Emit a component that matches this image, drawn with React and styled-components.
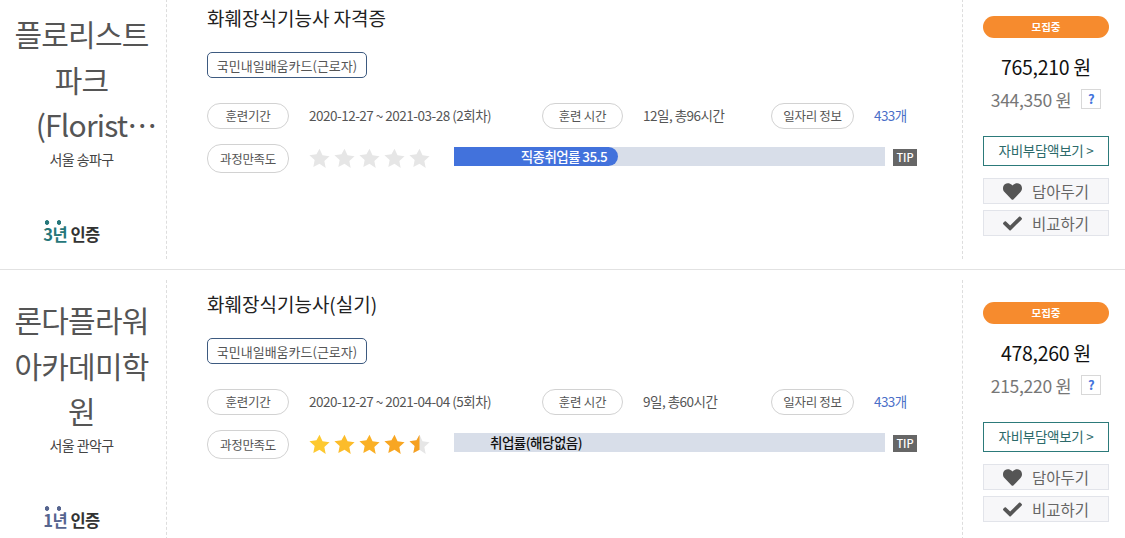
import styled, { createGlobalStyle } from "styled-components";
import { FaHeart, FaCheck } from "react-icons/fa";

const GlobalStyle = createGlobalStyle`
  html, body {
    margin: 0;
    padding: 0;
    background: #fff;
    overflow: hidden;
    height: 538px;
  }
  * { box-sizing: border-box; }
  body {
    font-family: "Noto Sans CJK KR", "Noto Sans", sans-serif;
    color: #333;
  }
`;

const List = styled.div`
  margin-top: -16px;
  width: 1125px;
`;

const Row = styled.div`
  display: grid;
  grid-template-columns: 167px 796px 162px;
  height: 286px;
  padding: 10px 0;
  border-bottom: 1px solid #e2e2e2;
`;

const Org = styled.div`
  display: flex;
  flex-direction: column;
  align-items: center;
  border-right: 1px dashed #ddd;
  padding: 17px 11px 0 8px;
`;

const OrgName = styled.div`
  width: 147px;
  height: 137px;
  font-size: 30px;
  line-height: 45.5px;
  letter-spacing: -0.8px;
  text-align: center;
  color: #555;
  overflow: hidden;
  display: -webkit-box;
  -webkit-box-orient: vertical;
  -webkit-line-clamp: 3;
`;

const Place = styled.div`
  font-size: 14px;
  line-height: 20px;
  letter-spacing: -0.6px;
  color: #444;
  margin-top: 1px;
`;

const Cert = styled.div`
  margin: 53px 20px 0 0;
  font-size: 16.5px;
  line-height: 24px;
  font-weight: 700;
  letter-spacing: -0.5px;
  color: #333;
`;

// 강조 점 두 개
const Years = styled.span`
  position: relative;
  color: ${(p) => p.$color};
  &::before {
    content: "";
    position: absolute;
    top: -2px;
    left: 2px;
    width: 16px;
    height: 5px;
    background: radial-gradient(circle at 2px 2.5px, ${(p) => p.$color} 2px, transparent 2.6px) 0 0 / 12px 5px repeat-x;
  }
`;

const Main = styled.div`
  padding: 12px 0 0 40px;
  border-right: 1px dashed #ddd;
`;

const Title = styled.div`
  font-size: 19px;
  line-height: 24px;
  color: #222;
`;

const Tag = styled.div`
  display: flex;
  align-items: center;
  justify-content: center;
  width: 160px;
  height: 26px;
  margin-top: 22px;
  border: 1px solid #3d5a80;
  border-radius: 5px;
  font-size: 13px;
  color: #555;
`;

const InfoRow = styled.div`
  display: flex;
  align-items: center;
  margin-top: 25px;
  height: 26px;
`;

const RateRow = styled.div`
  display: flex;
  align-items: center;
  margin-top: 15px;
  height: 29px;
`;

const Pill = styled.div`
  display: flex;
  align-items: center;
  justify-content: center;
  flex: none;
  width: ${(p) => p.$w || 82}px;
  height: ${(p) => p.$h || 26}px;
  padding-bottom: 1px;
  border: 1px solid #d2d2d2;
  border-radius: 14px;
  font-size: 12.5px;
  letter-spacing: -0.3px;
  color: #555;
`;

const Value = styled.div`
  width: ${(p) => p.$w}px;
  padding: 0 0 2px 20px;
  font-size: 13.5px;
  letter-spacing: -0.5px;
  color: #555;
  white-space: nowrap;
`;

const Link = styled.div`
  padding: 0 0 2px 20px;
  font-size: 13.5px;
  letter-spacing: -0.6px;
  color: #4a6fc8;
`;

const Stars = styled.div`
  display: flex;
  gap: 4px;
  width: 165px;
  padding-left: 20px;
`;

const Bar = styled.div`
  width: 431px;
  height: 19px;
  margin-bottom: 4px;
  background: #d8dee9;
  display: flex;
`;

const BarFill = styled.div`
  width: ${(p) => p.$w}px;
  height: 19px;
  padding-right: 11px;
  border-radius: 0 10px 10px 0;
  background: #4272dc;
  color: #fff;
  font-size: 13.5px;
  line-height: 19px;
  font-weight: 500;
  letter-spacing: -0.6px;
  text-align: right;
`;

const BarLabel = styled.div`
  padding-left: 36px;
  color: #111;
  font-size: 13.5px;
  line-height: 19px;
  font-weight: 500;
  letter-spacing: -0.5px;
`;

const Tip = styled.div`
  width: 24px;
  height: 17px;
  margin: 0 0 2px 8px;
  background: #666;
  color: #fff;
  font-size: 11px;
  line-height: 17px;
  font-weight: 500;
  text-align: center;
`;

const Side = styled.div`
  padding: 22px 16px 0 20px;
`;

const Status = styled.div`
  height: 22px;
  border-radius: 11px;
  background: #f68b2e;
  color: #fff;
  font-size: 10.5px;
  line-height: 22px;
  font-weight: 700;
  text-align: center;
`;

const Price = styled.div`
  margin-top: 16px;
  font-size: 19.5px;
  line-height: 26px;
  letter-spacing: -0.3px;
  color: #111;
  text-align: center;
`;

const SubPrice = styled.div`
  display: flex;
  align-items: center;
  justify-content: center;
  gap: 10px;
  margin-top: 6px;
  height: 26px;
  font-size: 17.5px;
  letter-spacing: -0.3px;
  color: #777;
`;

const Help = styled.div`
  width: 20px;
  height: 20px;
  border: 1px solid #d8d8d8;
  color: #4272dc;
  font-size: 13px;
  line-height: 18px;
  font-weight: 700;
  text-align: center;
`;

const CostButton = styled.div`
  height: 30px;
  margin-top: 24px;
  border: 1px solid #2c7a7a;
  color: #2c6a6a;
  font-size: 13.5px;
  line-height: 27px;
  letter-spacing: -0.3px;
  text-align: center;
`;

const ActionButton = styled.div`
  display: flex;
  align-items: center;
  justify-content: center;
  gap: 10px;
  height: 26px;
  margin-top: ${(p) => p.$gap}px;
  border: 1px solid #e2e4ea;
  background: #f7f7f9;
  color: #666;
  font-size: 15.5px;
  svg {
    color: #555;
    font-size: 19px;
  }
`;

const STAR_PATH = "M10 0.8l2.9 6.2 6.7.8-5 4.6 1.3 6.7L10 15l-5.9 3.1 1.3-6.7-5-4.6 6.7-.8z";

function Star({ color, half }) {
  return (
    <svg width="21" height="21" viewBox="0 0 20 20">
      {half ? (
        <>
          <path d={STAR_PATH} fill="#e6e6e6" />
          <path d={STAR_PATH} fill={color} clipPath="inset(0 50% 0 0)" />
        </>
      ) : (
        <path d={STAR_PATH} fill={color} />
      )}
    </svg>
  );
}

const GREY = "#e6e6e6";
const courses = [
  {
    org: "플로리스트 파크 (Florist Park)",
    place: "서울 송파구",
    years: "3년",
    yearColor: "#26777a",
    title: "화훼장식기능사 자격증",
    period: "2020-12-27 ~ 2021-03-28 (2회차)",
    hours: "12일, 총96시간",
    stars: [GREY, GREY, GREY, GREY, GREY],
    rate: "직종취업률 35.5",
    fill: 164,
    price: "765,210 원",
    sub: "344,350 원",
  },
  {
    org: "론다플라워 아카데미학원",
    place: "서울 관악구",
    years: "1년",
    yearColor: "#56658f",
    title: "화훼장식기능사(실기)",
    period: "2020-12-27 ~ 2021-04-04 (5회차)",
    hours: "9일, 총60시간",
    stars: ["#fdc931", "#fcbc2a", "#fab026", "#f8a622", "#f6a020"],
    half: true,
    rate: "취업률(해당없음)",
    price: "478,260 원",
    sub: "215,220 원",
  },
];

function Course({ course }) {
  return (
    <Row>
      <Org>
        <OrgName>{course.org}</OrgName>
        <Place>{course.place}</Place>
        <Cert>
          <Years $color={course.yearColor}>{course.years}</Years> 인증
        </Cert>
      </Org>
      <Main>
        <Title>{course.title}</Title>
        <Tag>국민내일배움카드(근로자)</Tag>
        <InfoRow>
          <Pill>훈련기간</Pill>
          <Value $w={253}>{course.period}</Value>
          <Pill $w={81}>훈련 시간</Pill>
          <Value $w={148}>{course.hours}</Value>
          <Pill $w={83}>일자리 정보</Pill>
          <Link>433개</Link>
        </InfoRow>
        <RateRow>
          <Pill $h={29}>과정만족도</Pill>
          <Stars>
            {course.stars.map((c, i) => (
              <Star key={i} color={c} half={course.half && i === 4} />
            ))}
          </Stars>
          <Bar>
            {course.fill ? (
              <BarFill $w={course.fill}>{course.rate}</BarFill>
            ) : (
              <BarLabel>{course.rate}</BarLabel>
            )}
          </Bar>
          <Tip>TIP</Tip>
        </RateRow>
      </Main>
      <Side>
        <Status>모집중</Status>
        <Price>{course.price}</Price>
        <SubPrice>
          {course.sub}
          <Help>?</Help>
        </SubPrice>
        <CostButton>자비부담액보기 &gt;</CostButton>
        <ActionButton $gap={12}>
          <FaHeart />
          담아두기
        </ActionButton>
        <ActionButton $gap={6}>
          <FaCheck />
          비교하기
        </ActionButton>
      </Side>
    </Row>
  );
}

export default function App() {
  return (
    <>
      <GlobalStyle />
      <List>
        {courses.map((c) => (
          <Course key={c.title} course={c} />
        ))}
      </List>
    </>
  );
}
